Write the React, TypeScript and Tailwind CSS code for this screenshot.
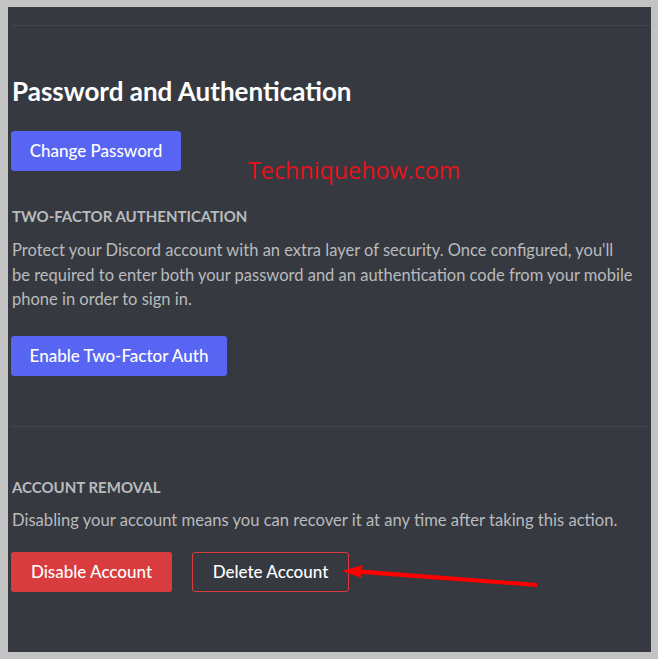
export default function App() {
  return (
    <div className="relative w-[658px] h-[659px] bg-[#c3c3c3] pt-[7px] pl-[8px] pr-[7px] pb-[7px] font-['Lato','Noto_Sans',sans-serif]">
      <div className="h-full bg-[#36393f] flex flex-col pl-[3px]">
        <div className="mt-[18px] h-px bg-[#42454b]" />

        <h2 className="mt-[50px] pl-px text-[26px] leading-[30px] font-bold text-white">
          Password and Authentication
        </h2>

        <div className="mt-[25px]">
          <button className="h-[40px] w-[170px] rounded-[3px] bg-[#5865f2] text-[17px] font-medium text-white">
            Change Password
          </button>
        </div>

        <h3 className="mt-[36px] pl-px text-[15px] leading-[18px] font-bold uppercase text-[#b9bbbe]">
          Two-Factor Authentication
        </h3>
        <p className="mt-[13px] pl-px w-[622px] text-[16.5px] leading-[24.5px] text-[#b9bbbe]">
          Protect your Discord account with an extra layer of security. Once configured, you'll be required to enter both
          your password and an authentication code from your mobile phone in order to sign in.
        </p>

        <div className="mt-[24px]">
          <button className="h-[40px] w-[216px] rounded-[3px] bg-[#5865f2] text-[17px] font-medium text-white">
            Enable Two-Factor Auth
          </button>
        </div>

        <div className="mt-[50px] h-px bg-[#42454b]" />

        <h3 className="mt-[51px] pl-px text-[15px] leading-[18px] font-bold uppercase text-[#b9bbbe]">
          Account Removal
        </h3>
        <p className="mt-[12px] pl-px text-[16.6px] leading-[24px] text-[#b9bbbe]">
          Disabling your account means you can recover it at any time after taking this action.
        </p>

        <div className="mt-[20px] flex gap-[20px]">
          <button className="h-[40px] w-[161px] rounded-[3px] bg-[#d83c3e] text-[17px] font-medium text-white">
            Disable Account
          </button>
          <button className="h-[40px] w-[157px] rounded-[3px] border border-[#d83c3e] text-[17px] font-medium text-white">
            Delete Account
          </button>
        </div>
      </div>

      {/* watermark */}
      <div className="absolute left-[248px] top-[155px] text-[23.3px] leading-[30px] text-[#e8111b] font-['Open_Sans',sans-serif]">
        Techniquehow.com
      </div>

      {/* annotation arrow */}
      <svg className="absolute inset-0 pointer-events-none" width="658" height="659" viewBox="0 0 658 659">
        <polygon points="342,571 363,565 361,569.5 537,583 537,587 361,574 362,578" fill="#ff0000" />
      </svg>
    </div>
  );
}
